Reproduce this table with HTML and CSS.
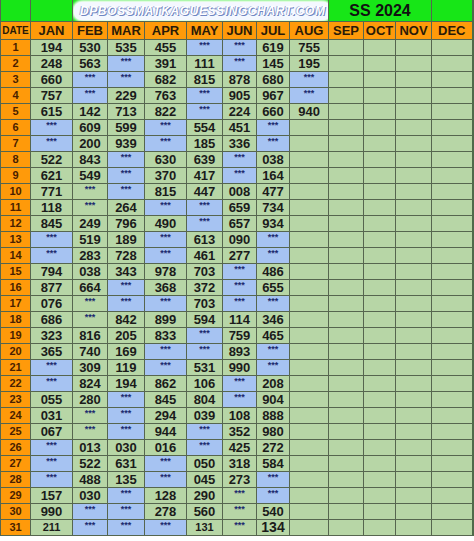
FILE: index.html
```html
<!DOCTYPE html>
<html>
<head>
<meta charset="utf-8">
<link rel="stylesheet" href="styles.css">
</head>
<body>
<div class="sheet">
<table class="chart">
<colgroup>
<col class="c-date"><col class="c-jan"><col class="c-feb"><col class="c-mar"><col class="c-apr"><col class="c-may"><col class="c-jun"><col class="c-jul"><col class="c-aug"><col class="c-sep"><col class="c-oct"><col class="c-nov"><col class="c-dec">
</colgroup>
<thead>
<tr class="title-row">
<td></td><td></td>
<td colspan="7" class="brand"><span class="brand-text">DPBOSSMATKAGUESSINGCHART.COM</span></td>
<td colspan="3" class="year">SS 2024</td>
<td></td>
</tr>
<tr class="head-row">
<th class="date-h">DATE</th><th>JAN</th><th>FEB</th><th>MAR</th><th>APR</th><th>MAY</th><th>JUN</th><th>JUL</th><th>AUG</th><th>SEP</th><th>OCT</th><th>NOV</th><th>DEC</th>
</tr>
</thead>
<tbody>
<tr><th>1</th><td>194</td><td>530</td><td>535</td><td>455</td><td class="x">***</td><td class="x">***</td><td>619</td><td>755</td><td></td><td></td><td></td><td></td></tr>
<tr><th>2</th><td>248</td><td>563</td><td class="x">***</td><td>391</td><td>111</td><td class="x">***</td><td>145</td><td>195</td><td></td><td></td><td></td><td></td></tr>
<tr><th>3</th><td>660</td><td class="x">***</td><td class="x">***</td><td>682</td><td>815</td><td>878</td><td>680</td><td class="x">***</td><td></td><td></td><td></td><td></td></tr>
<tr><th>4</th><td>757</td><td class="x">***</td><td>229</td><td>763</td><td class="x">***</td><td>905</td><td>967</td><td class="x">***</td><td></td><td></td><td></td><td></td></tr>
<tr><th>5</th><td>615</td><td>142</td><td>713</td><td>822</td><td class="x">***</td><td>224</td><td>660</td><td>940</td><td></td><td></td><td></td><td></td></tr>
<tr><th>6</th><td class="x">***</td><td>609</td><td>599</td><td class="x">***</td><td>554</td><td>451</td><td class="x">***</td><td></td><td></td><td></td><td></td><td></td></tr>
<tr><th>7</th><td class="x">***</td><td>200</td><td>939</td><td class="x">***</td><td>185</td><td>336</td><td class="x">***</td><td></td><td></td><td></td><td></td><td></td></tr>
<tr><th>8</th><td>522</td><td>843</td><td class="x">***</td><td>630</td><td>639</td><td class="x">***</td><td>038</td><td></td><td></td><td></td><td></td><td></td></tr>
<tr><th>9</th><td>621</td><td>549</td><td class="x">***</td><td>370</td><td>417</td><td class="x">***</td><td>164</td><td></td><td></td><td></td><td></td><td></td></tr>
<tr><th>10</th><td>771</td><td class="s">***</td><td class="x">***</td><td>815</td><td>447</td><td>008</td><td>477</td><td></td><td></td><td></td><td></td><td></td></tr>
<tr><th>11</th><td>118</td><td class="s">***</td><td>264</td><td class="x">***</td><td class="x">***</td><td>659</td><td>734</td><td></td><td></td><td></td><td></td><td></td></tr>
<tr><th>12</th><td>845</td><td>249</td><td>796</td><td>490</td><td class="x">***</td><td>657</td><td>934</td><td></td><td></td><td></td><td></td><td></td></tr>
<tr><th>13</th><td class="x">***</td><td>519</td><td>189</td><td class="x">***</td><td>613</td><td>090</td><td class="x">***</td><td></td><td></td><td></td><td></td><td></td></tr>
<tr><th>14</th><td class="x">***</td><td>283</td><td>728</td><td class="x">***</td><td>461</td><td>277</td><td class="x">***</td><td></td><td></td><td></td><td></td><td></td></tr>
<tr><th>15</th><td>794</td><td>038</td><td>343</td><td>978</td><td>703</td><td class="x">***</td><td>486</td><td></td><td></td><td></td><td></td><td></td></tr>
<tr><th>16</th><td>877</td><td>664</td><td class="x">***</td><td>368</td><td>372</td><td class="x">***</td><td>655</td><td></td><td></td><td></td><td></td><td></td></tr>
<tr><th>17</th><td>076</td><td class="s">***</td><td class="x">***</td><td class="x">***</td><td>703</td><td class="x">***</td><td class="x">***</td><td></td><td></td><td></td><td></td><td></td></tr>
<tr><th>18</th><td>686</td><td class="s">***</td><td>842</td><td>899</td><td>594</td><td>114</td><td>346</td><td></td><td></td><td></td><td></td><td></td></tr>
<tr><th>19</th><td>323</td><td>816</td><td>205</td><td>833</td><td class="x">***</td><td>759</td><td>465</td><td></td><td></td><td></td><td></td><td></td></tr>
<tr><th>20</th><td>365</td><td>740</td><td>169</td><td class="x">***</td><td class="x">***</td><td>893</td><td class="x">***</td><td></td><td></td><td></td><td></td><td></td></tr>
<tr><th>21</th><td class="x">***</td><td>309</td><td>119</td><td class="x">***</td><td>531</td><td>990</td><td class="x">***</td><td></td><td></td><td></td><td></td><td></td></tr>
<tr><th>22</th><td class="x">***</td><td>824</td><td>194</td><td>862</td><td>106</td><td class="x">***</td><td>208</td><td></td><td></td><td></td><td></td><td></td></tr>
<tr><th>23</th><td>055</td><td>280</td><td class="x">***</td><td>845</td><td>804</td><td class="x">***</td><td>904</td><td></td><td></td><td></td><td></td><td></td></tr>
<tr><th>24</th><td>031</td><td class="s">***</td><td class="x">***</td><td>294</td><td>039</td><td>108</td><td>888</td><td></td><td></td><td></td><td></td><td></td></tr>
<tr><th>25</th><td>067</td><td class="s">***</td><td class="x">***</td><td>944</td><td class="x">***</td><td>352</td><td>980</td><td></td><td></td><td></td><td></td><td></td></tr>
<tr><th>26</th><td class="x">***</td><td>013</td><td>030</td><td>016</td><td class="x">***</td><td>425</td><td>272</td><td></td><td></td><td></td><td></td><td></td></tr>
<tr><th>27</th><td class="x">***</td><td>522</td><td>631</td><td class="x">***</td><td>050</td><td>318</td><td>584</td><td></td><td></td><td></td><td></td><td></td></tr>
<tr><th>28</th><td class="x">***</td><td>488</td><td>135</td><td class="x">***</td><td>045</td><td>273</td><td class="x">***</td><td></td><td></td><td></td><td></td><td></td></tr>
<tr><th>29</th><td>157</td><td>030</td><td class="x">***</td><td>128</td><td>290</td><td class="s">***</td><td class="x">***</td><td></td><td></td><td></td><td></td><td></td></tr>
<tr><th>30</th><td>990</td><td class="x">***</td><td class="x">***</td><td>278</td><td>560</td><td class="s">***</td><td>540</td><td></td><td></td><td></td><td></td><td></td></tr>
<tr class="last"><th>31</th><td class="small">211</td><td class="x">***</td><td class="x">***</td><td class="x">***</td><td class="small">131</td><td class="s">***</td><td class="big">134</td><td></td><td></td><td></td><td></td><td></td></tr>
</tbody>
</table>
</div>
</body>
</html>
```
FILE: styles.css
```css
html, body {
  margin: 0;
  padding: 0;
  background: #ffffff;
}
.sheet {
  width: 474px;
}
.chart {
  border-collapse: collapse;
  table-layout: fixed;
  width: 473px;
  font-family: "Liberation Sans", Arial, sans-serif;
  border-right: 2px solid #4f6a4a;
}
.c-date { width: 30px; }
.c-jan { width: 42px; }
.c-feb { width: 35px; }
.c-mar { width: 37px; }
.c-apr { width: 42px; }
.c-may { width: 36px; }
.c-jun { width: 34px; }
.c-jul { width: 33px; }
.c-aug { width: 39px; }
.c-sep { width: 35px; }
.c-oct { width: 32px; }
.c-nov { width: 36px; }
.c-dec { width: 41px; }

.chart td, .chart th {
  border: 1px solid #56664f;
  padding: 0;
  text-align: center;
  vertical-align: middle;
  overflow: hidden;
  white-space: nowrap;
}
.chart tbody td {
  background: #b7d6a6;
  height: 15px;
  font-size: 13px;
  font-weight: bold;
  color: #1b1b1b;
  line-height: 15px;
}
.chart tbody th {
  background: #ff9a0a;
  font-size: 11px;
  font-weight: bold;
  color: #4a1f00;
  height: 15px;
  line-height: 15px;
}
.chart tbody td.x {
  background: #a6c3f2;
}
.chart tbody td.x, .chart tbody td.s {
  font-size: 9px;
  color: #1c2a6e;
  vertical-align: top;
  line-height: 10px;
}
.chart tbody td.small {
  font-size: 11px;
}
.chart tbody td.big {
  font-size: 14px;
}

.title-row td {
  background: #17e617;
  height: 21px;
  border-top: none;
  border-bottom: none;
}
.title-row td.brand {
  text-align: left;
}
.brand-text {
  display: inline-block;
  margin-left: 1px;
  padding: 2px 6px;
  background: #f4f8ff;
  border-radius: 8px;
  font-size: 12px;
  font-weight: bold;
  font-style: italic;
  letter-spacing: 0.6px;
  color: #ffffff;
  text-shadow: 1px 1px 0 #6f86c2, -1px 0 0 #9aa9d6;
  line-height: 14px;
  box-shadow: 0 0 3px 2px #ffffff;
}
.title-row td.year {
  font-size: 16px;
  font-weight: bold;
  color: #111;
}
.head-row th {
  background: #ff9a0a;
  height: 17px;
  font-size: 13px;
  font-weight: bold;
  color: #2a1a08;
  line-height: 17px;
}
.head-row th.date-h {
  font-size: 10px;
}
```
